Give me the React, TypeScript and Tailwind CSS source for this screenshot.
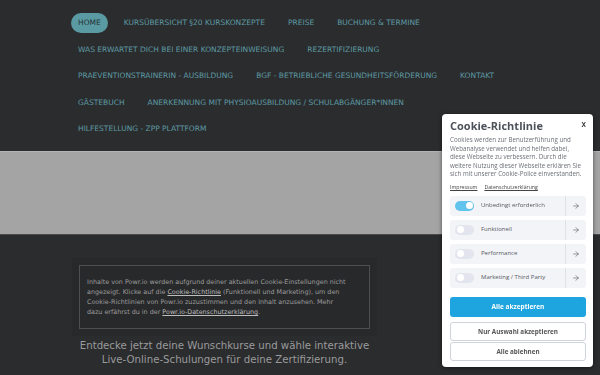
import { ArrowRight } from "lucide-react";

const navRows: string[][] = [
  ["HOME", "KURSÜBERSICHT §20 KURSKONZEPTE", "PREISE", "BUCHUNG & TERMINE"],
  ["WAS ERWARTET DICH BEI EINER KONZEPTEINWEISUNG", "REZERTIFIZIERUNG"],
  [
    "PRAEVENTIONSTRAINERIN - AUSBILDUNG",
    "BGF - BETRIEBLICHE GESUNDHEITSFÖRDERUNG",
    "KONTAKT",
  ],
  ["GÄSTEBUCH", "ANERKENNUNG MIT PHYSIOAUSBILDUNG / SCHULABGÄNGER*INNEN"],
  ["HILFESTELLUNG - ZPP PLATTFORM"],
];

const categories = [
  { label: "Unbedingt erforderlich", on: true },
  { label: "Funktionell", on: false },
  { label: "Performance", on: false },
  { label: "Marketing / Third Party", on: false },
];

function Toggle({ on }: { on: boolean }) {
  return (
    <div
      className={
        on
          ? "flex h-[10px] w-[19px] items-center justify-end rounded-full bg-[#62c3ec] px-[1.5px]"
          : "flex h-[10px] w-[19px] items-center justify-start rounded-full bg-[#e3e5ee] px-[1.5px]"
      }
    >
      <div className="h-[7px] w-[7px] rounded-full bg-white" />
    </div>
  );
}

function CookiePanel() {
  return (
    <div className="fixed left-[442px] top-[114px] flex h-[253px] w-[151px] flex-col rounded-[4px] bg-white pl-[8px] pr-[7px] pt-[4px] shadow-[0_1px_4px_rgba(0,0,0,0.5)] [font-family:'Open_Sans',sans-serif]">
      <div className="flex items-start justify-between">
        <div className="text-[11px] font-bold leading-[16px] text-[#4d525a]">
          Cookie-Richtlinie
        </div>
        <div className="mt-[1px] text-[8px] font-semibold leading-[10px] text-[#333]">
          x
        </div>
      </div>
      <div className="mt-[2px] whitespace-nowrap text-[6.2px] leading-[8.6px] text-[#6b6f76]">
        Cookies werden zur Benutzerführung und
        <br />
        Webanalyse verwendet und helfen dabei,
        <br />
        diese Webseite zu verbessern. Durch die
        <br />
        weitere Nutzung dieser Webseite erklären Sie
        <br />
        sich mit unserer Cookie-Police einverstanden.
      </div>
      <div className="mt-[4px] flex gap-[7px] text-[5.2px] leading-[8px] text-[#444] underline">
        <span>Impressum</span>
        <span>Datenschutzerklärung</span>
      </div>
      <div className="mt-[5px] flex flex-col gap-[4px]">
        {categories.map((c) => (
          <div
            key={c.label}
            className="flex h-[20px] items-center rounded-[3px] bg-[#f3f4f8]"
          >
            <div className="flex flex-1 items-center gap-[7px] pl-[5px]">
              <Toggle on={c.on} />
              <span className="text-[6px] text-[#555a62]">{c.label}</span>
            </div>
            <div className="flex h-full w-[21px] items-center justify-center border-l border-[#dfe1e7]">
              <ArrowRight size={8} strokeWidth={1.6} color="#444" />
            </div>
          </div>
        ))}
      </div>
      <div className="mt-[9px] flex h-[20px] items-center justify-center rounded-[3px] bg-[#1ea4df] text-[6.5px] font-bold text-white">
        Alle akzeptieren
      </div>
      <div className="mt-[5px] flex h-[19px] items-center justify-center rounded-[3px] border border-[#cfd3dc] text-[6.3px] font-bold text-[#555]">
        Nur Auswahl akzeptieren
      </div>
      <div className="mt-[1px] flex h-[19px] items-center justify-center rounded-[3px] border border-[#cfd3dc] text-[6.3px] font-bold text-[#555]">
        Alle ablehnen
      </div>
    </div>
  );
}

export default function App() {
  return (
    <div className="relative h-[375px] w-[600px] overflow-hidden bg-[#2b2c2e] [font-family:'DejaVu_Sans',sans-serif]">
      <nav className="flex flex-col gap-[6.5px] pl-[71px] pt-[13px]">
        {navRows.map((row, i) => (
          <div key={i} className="flex h-[20px] items-center gap-[9px]">
            {row.map((item) => (
              <div
                key={item}
                className={
                  item === "HOME"
                    ? "flex h-[20px] items-center rounded-full bg-[#5a9ba3] px-[7px] text-[7.5px] text-[#243236]"
                    : "flex h-[20px] items-center px-[7px] text-[7.5px] text-[#5d9aa3]"
                }
              >
                {item}
              </div>
            ))}
          </div>
        ))}
      </nav>

      <div className="mt-[12px] h-[84px] border-t border-b border-t-[#b3b3b3] border-b-[#4a4a4a] bg-[#a4a4a4]" />

      <div className="ml-[72px] mt-[23px] w-[305px]">
        <div className="bg-[#28292b] p-[7px]">
          <div className="border border-[#4e4f51] px-[7px] pb-[11px] pt-[11px] text-[6.4px] leading-[10px] text-[#9c9c9c] whitespace-nowrap">
            Inhalte von Powr.io werden aufgrund deiner aktuellen Cookie-Einstellungen nicht
            <br />
            angezeigt. Klicke auf die{" "}
            <span className="text-[#bdbdbd] underline">Cookie-Richtlinie</span>{" "}
            (Funktionell und Marketing), um den
            <br />
            Cookie-Richtlinien von Powr.io zuzustimmen und den Inhalt anzusehen. Mehr
            <br />
            dazu erfährst du in der{" "}
            <span className="text-[#bdbdbd] underline">
              Powr.io-Datenschutzerklärung
            </span>
            .
          </div>
        </div>
        <div className="mt-[3px] text-center text-[10.2px] leading-[14px] text-[#9a9b9c]">
          Entdecke jetzt deine Wunschkurse und wähle interaktive
          <br />
          Live-Online-Schulungen für deine Zertifizierung.
        </div>
      </div>

      <CookiePanel />
    </div>
  );
}
